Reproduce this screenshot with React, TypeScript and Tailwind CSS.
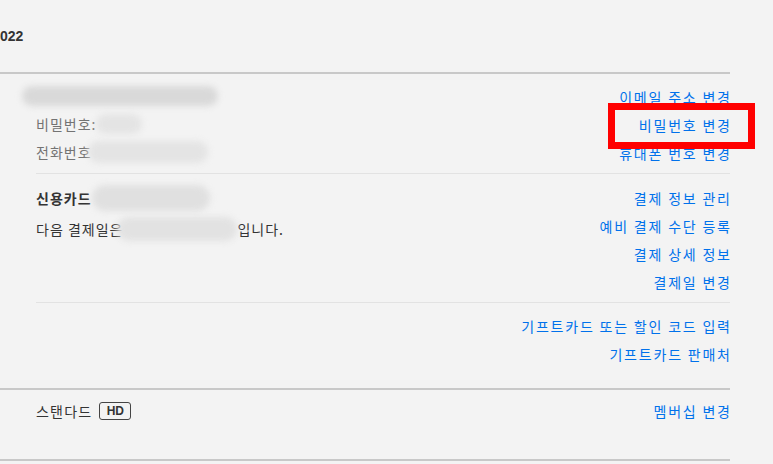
import React from "react";

const link = "text-[#0071eb] leading-[28px] whitespace-nowrap tracking-[1.8px] -mr-[1.8px]";

function Blob({ w, h, className = "" }: { w: number; h: number; className?: string }) {
  return (
    <span
      className={`inline-block align-middle rounded-full bg-[#d9d9d9] blur-[3px] ${className}`}
      style={{ width: w, height: h }}
    />
  );
}

export default function App() {
  return (
    <div
      className="w-[773px] h-[464px] overflow-hidden bg-[#f3f3f3] text-[14px] relative"
      style={{ fontFamily: '"Noto Sans CJK KR", "Noto Sans", sans-serif' }}
    >
      <div className="w-[730px]">
        {/* header */}
        <div className="h-[72px] flex items-center">
          <span
            className="text-[14px] font-bold text-[#333]"
            style={{ fontFamily: '"Liberation Sans", Arial, sans-serif' }}
          >
            022
          </span>
        </div>
        <div className="h-[2px] bg-[#c8c8c8]" />

        {/* membership & payment */}
        <div className="pl-[36px] pb-[20px] tracking-[1px]">
          {/* account info */}
          <div className="flex justify-between pt-[8px] pb-[6px]">
            <div className="flex flex-col text-[#737373] leading-[28px]">
              <div className="h-[28px] flex items-center -ml-[14px]">
                <Blob w={196} h={20} className="bg-[#d3d3d3]" />
              </div>
              <div className="h-[28px] flex items-center">
                <span>비밀번호:</span>
                <Blob w={46} h={20} className="bg-[#e4e4e4]" />
              </div>
              <div className="h-[28px] flex items-center">
                <span>전화번호</span>
                <Blob w={120} h={22} className="-ml-[4px] bg-[#e4e4e4]" />
              </div>
            </div>
            <div className="flex flex-col items-end pt-[1px]">
              <span className={link}>이메일 주소 변경</span>
              <span className={link}>비밀번호 변경</span>
              <span className={link}>휴대폰 번호 변경</span>
            </div>
          </div>
          <div className="h-px bg-[#e2e2e2]" />

          {/* payment */}
          <div className="flex justify-between pt-[10px] pb-[6px]">
            <div className="flex flex-col text-[#333]">
              <div className="h-[28px] flex items-center font-bold">
                <span>신용카드</span>
                <Blob w={118} h={26} className="bg-[#e0e0e0]" />
              </div>
              <div className="h-[28px] flex items-center mt-[3px]">
                <span>다음 결제일은</span>
                <Blob w={120} h={24} className="-ml-[6px] bg-[#e2e2e2]" />
                <span>입니다.</span>
              </div>
            </div>
            <div className="flex flex-col items-end">
              <span className={link}>결제 정보 관리</span>
              <span className={link}>예비 결제 수단 등록</span>
              <span className={link}>결제 상세 정보</span>
              <span className={link}>결제일 변경</span>
            </div>
          </div>
          <div className="h-px bg-[#e2e2e2]" />

          {/* gift card */}
          <div className="flex flex-col items-end pt-[9px]">
            <span className={link}>기프트카드 또는 할인 코드 입력</span>
            <span className={link}>기프트카드 판매처</span>
          </div>
        </div>
        <div className="h-[2px] bg-[#c8c8c8]" />

        {/* plan */}
        <div className="pl-[36px] flex justify-between pt-[7px] h-[69px]">
          <div className="h-[28px] flex items-center gap-[7px] text-[#333] tracking-[1.2px]">
            <span>스탠다드</span>
            <span
              className="inline-flex items-center justify-center w-[32px] h-[18px] border-[1.5px] border-[#444] rounded-[3px] text-[12px] font-bold text-[#333] leading-none tracking-normal"
              style={{ fontFamily: '"Liberation Sans", Arial, sans-serif' }}
            >
              HD
            </span>
          </div>
          <span className={link}>멤버십 변경</span>
        </div>
        <div className="h-[2px] bg-[#c8c8c8]" />
      </div>

      {/* red highlight box */}
      <div className="absolute left-[608px] top-[103px] w-[147px] h-[46px] border-[7px] border-[#ff0000]" />
    </div>
  );
}
